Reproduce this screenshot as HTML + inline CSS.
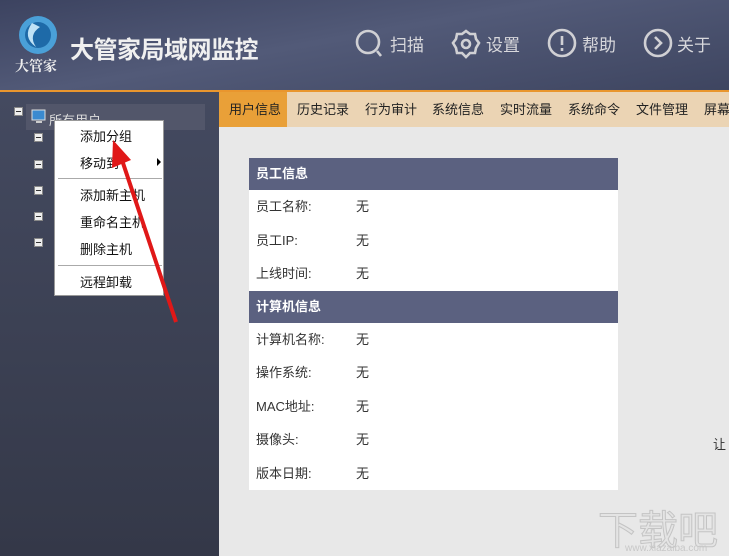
<!DOCTYPE html>
<html><head><meta charset="utf-8"><style>
*{margin:0;padding:0;box-sizing:border-box}
body{width:729px;height:556px;overflow:hidden;position:relative;font-family:"Liberation Sans","Noto Sans CJK SC",sans-serif;font-size:13px;background:#e8e8e8}
#hdr{position:absolute;left:0;top:0;width:729px;height:90px;background:linear-gradient(170deg,#3c4360 0%,#525a78 45%,#3e4560 100%)}
#line{position:absolute;left:0;top:90px;width:729px;height:2px;background:#e9962e}
#side{position:absolute;left:0;top:92px;width:219px;height:464px;background:linear-gradient(180deg,#444a60 0%,#343848 100%)}
#tabs{position:absolute;left:219px;top:92px;width:510px;height:35px;background:#ebd4b4}
.tab{position:absolute;top:92px;height:35px;line-height:36px;font-size:13px;color:#222;white-space:nowrap}
.hi{position:absolute;color:#d8d8dc;font-size:17px;top:31px}
.tbl{position:absolute;left:249px;width:369px;background:#fff}
.th{background:#5b6180;color:#fff;font-weight:bold;height:32px;line-height:32px;padding-left:7px;font-size:13px}
.tr{height:33.5px;line-height:33.5px;padding-left:7px;color:#333;position:relative}
.tr span{position:absolute;left:107px}
#menu{position:absolute;left:54px;top:120px;width:110px;height:176px;background:#fff;border:1px solid #999}
.mi{position:absolute;left:25px;font-size:13px;color:#111}
.sep{position:absolute;left:3px;width:104px;height:1px;background:#aaa}
.box{position:absolute;width:9px;height:9px;background:#eee;border:1px solid #888}
.box:after{content:"";position:absolute;left:1px;top:3px;width:5px;height:1px;background:#333}
</style></head><body>
<div id="hdr"></div>
<svg style="position:absolute;left:18px;top:15px" width="40" height="40"><circle cx="20" cy="20" r="19" fill="#4aa0d8"/><circle cx="20" cy="20" r="13" fill="#1e6aa8"/><path d="M14 8 Q4 22 18 32 Q10 20 22 12 Z" fill="#bfe2f6"/></svg>
<div style="position:absolute;left:15px;top:56px;color:#eee;font-family:'Noto Serif CJK SC',serif;font-size:14px;font-weight:bold">大管家</div>
<div style="position:absolute;left:70px;top:30px;color:#f0f0f0;font-size:24px;font-weight:bold;letter-spacing:-0.5px">大管家局域网监控</div>
<svg style="position:absolute;left:355px;top:29px" width="30" height="30" fill="none" stroke="#d0d0d4" stroke-width="2.6"><circle cx="13" cy="13" r="11"/><path d="M22 22 L26 27"/></svg>
<div class="hi" style="left:390px">扫描</div>
<svg style="position:absolute;left:451px;top:29px" width="30" height="30" fill="none" stroke="#d0d0d4" stroke-width="2.6"><path d="M15 2 L19 5 L24 5 L25 10 L28 14 L25 19 L24 24 L19 24 L15 28 L11 24 L6 24 L5 19 L2 14 L5 10 L6 5 L11 5 Z"/><circle cx="15" cy="15" r="4"/></svg>
<div class="hi" style="left:486px">设置</div>
<svg style="position:absolute;left:547px;top:28px" width="30" height="30" fill="none" stroke="#d0d0d4" stroke-width="2.6"><circle cx="15" cy="15" r="13"/><path d="M15 8 L15 17 M15 20 L15 23"/></svg>
<div class="hi" style="left:582px">帮助</div>
<svg style="position:absolute;left:643px;top:28px" width="30" height="30" fill="none" stroke="#d0d0d4" stroke-width="2.6"><circle cx="15" cy="15" r="13"/><path d="M12 9 L18 15 L12 21"/></svg>
<div class="hi" style="left:677px">关于</div>
<div id="line"></div>
<div id="side"></div>
<div style="position:absolute;left:26px;top:104px;width:179px;height:26px;background:#52566a"></div>
<div class="box" style="left:14px;top:107px"></div>
<svg style="position:absolute;left:31px;top:108px" width="16" height="16"><rect x="1" y="2" width="13" height="10" fill="#3a8ad0" stroke="#ddd"/><rect x="5" y="13" width="6" height="2" fill="#ccc"/></svg>
<div style="position:absolute;left:49px;top:110px;color:#ddd;font-size:13px">所有用户</div>
<div class="box" style="left:34px;top:133px"></div>
<div class="box" style="left:34px;top:160px"></div>
<div class="box" style="left:34px;top:186px"></div>
<div class="box" style="left:34px;top:212px"></div>
<div class="box" style="left:34px;top:238px"></div>
<div id="tabs"></div>
<div class="tab" style="left:219px;width:68px;background:#e9a038;padding-left:10px">用户信息</div>
<div class="tab" style="left:297px">历史记录</div>
<div class="tab" style="left:365px">行为审计</div>
<div class="tab" style="left:432px">系统信息</div>
<div class="tab" style="left:500px">实时流量</div>
<div class="tab" style="left:568px">系统命令</div>
<div class="tab" style="left:636px">文件管理</div>
<div class="tab" style="left:704px">屏幕</div>
<div class="tbl" style="top:158px">
<div class="th">员工信息</div>
<div class="tr">员工名称:<span>无</span></div>
<div class="tr">员工IP:<span>无</span></div>
<div class="tr">上线时间:<span>无</span></div>
<div class="th">计算机信息</div>
<div class="tr">计算机名称:<span>无</span></div>
<div class="tr">操作系统:<span>无</span></div>
<div class="tr">MAC地址:<span>无</span></div>
<div class="tr">摄像头:<span>无</span></div>
<div class="tr">版本日期:<span>无</span></div>
</div>
<div style="position:absolute;left:713px;top:434px;color:#333;font-size:13px">让</div>
<div style="position:absolute;left:598px;top:498px;color:#e4e4e4;font-size:40px;-webkit-text-stroke:1px #c4c4c4">下载吧</div>
<div style="position:absolute;left:625px;top:543px;color:#c8c8c8;font-size:10px">www.xiazaiba.com</div>
<div id="menu">
<div class="mi" style="top:5px">添加分组</div>
<div class="mi" style="top:32px">移动到</div>
<div style="position:absolute;left:102px;top:37px;width:0;height:0;border-left:4px solid #000;border-top:4px solid transparent;border-bottom:4px solid transparent"></div>
<div class="sep" style="top:57px"></div>
<div class="mi" style="top:64px">添加新主机</div>
<div class="mi" style="top:91px">重命名主机</div>
<div class="mi" style="top:118px">删除主机</div>
<div class="sep" style="top:144px"></div>
<div class="mi" style="top:151px">远程卸载</div>
</div>
<svg style="position:absolute;left:0;top:0" width="729" height="556"><path d="M176 322 L122 160" stroke="#e01818" stroke-width="4"/><path d="M113 140 L112 168 L131 160 Z" fill="#e01818"/></svg>
</body></html>
